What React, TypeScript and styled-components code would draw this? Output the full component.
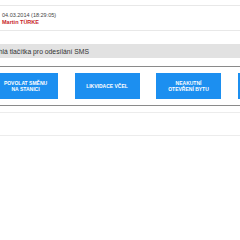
import styled, { createGlobalStyle } from "styled-components";

const GlobalStyle = createGlobalStyle`
  body {
    margin: 0;
    background: #fff;
    overflow: hidden;
    font-family: "Liberation Sans", Arial, sans-serif;
  }
`;

const Page = styled.div`
  width: 240px;
  padding-top: 5px;
`;

const Header = styled.div`
  border-top: 1px solid #e8e8e8;
  border-bottom: 1px solid #e8e8e8;
  padding: 6px 2px 5px;
  display: flex;
  flex-direction: column;
  gap: 1px;
`;

const Stamp = styled.span`
  font-size: 5.5px;
  line-height: 6px;
  color: #444;
`;

const Author = styled.span`
  font-size: 5.5px;
  line-height: 6px;
  font-weight: 700;
  color: #c8242b;
`;

const SectionTitle = styled.div`
  margin-top: 13px;
  height: 14px;
  background: #e2e2e2;
  display: flex;
  align-items: center;
  white-space: nowrap;
  font-size: 6.8px;
  color: #333;
  text-indent: -13px;
`;

const Box = styled.div`
  margin-top: 8px;
  border-top: 1px solid #8a8a8a;
  border-bottom: 1px solid #8a8a8a;
  padding: 6px 0 6px;
  overflow: hidden;
`;

const ButtonRow = styled.div`
  display: flex;
  gap: 16.5px;
  margin-left: -7px;
  width: 400px;
`;

const SmsButton = styled.button`
  flex: 0 0 65px;
  height: 26px;
  border: none;
  border-radius: 0;
  background: #1c8ff0;
  color: #fff;
  font-family: "Liberation Sans", Arial, sans-serif;
  font-size: 5px;
  line-height: 6px;
  font-weight: 700;
  text-transform: uppercase;
  text-align: center;
  padding: 0 4px;
`;

const EmptyRow = styled.div`
  margin-top: 6px;
  height: 22px;
  border-top: 1px solid #ececec;
  border-bottom: 1px solid #ececec;
`;

const buttons = [
  ["Povolat směnu", "na stanici"],
  ["Likvidace včel"],
  ["Neakutní", "otevření bytu"],
  [],
];

const App = () => {
  return (
    <>
      <GlobalStyle />
      <Page>
        <Header>
          <Stamp>04.03.2014 (18:29:05)</Stamp>
          <Author>Martin TÜRKE</Author>
        </Header>
        <SectionTitle>Rychlá tlačítka pro odesílání SMS</SectionTitle>
        <Box>
          <ButtonRow>
            {buttons.map((lines, i) => (
              <SmsButton key={i}>
                {lines.map((l, j) => (
                  <span key={j}>
                    {l}
                    {j < lines.length - 1 && <br />}
                  </span>
                ))}
              </SmsButton>
            ))}
          </ButtonRow>
        </Box>
        <EmptyRow />
      </Page>
    </>
  );
};

export default App;
